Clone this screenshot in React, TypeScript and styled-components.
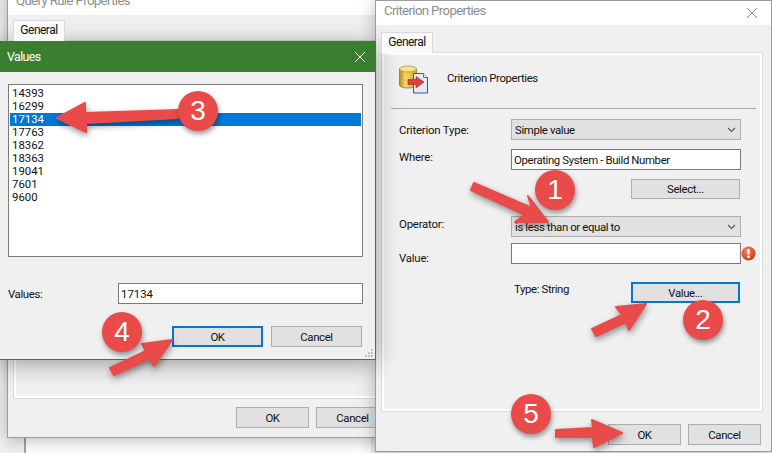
import styled, { createGlobalStyle } from 'styled-components'

const GlobalStyle = createGlobalStyle`
	html, body {
		margin: 0;
		height: 100%;
		overflow: hidden;
		background: #f0f0f0;
	}
	#root {
		height: 100%;
	}
`

const values = ['14393', '16299', '17134', '17763', '18362', '18363', '19041', '7601', '9600']

type Pt = [number, number]

// tail end, tapered shaft and head of each red callout arrow
const arrows: Pt[][] = [
	[[178, 110], [85, 113], [85, 103], [57, 118], [86, 132], [86, 123], [178, 118]],
	[[474, 183], [532, 208], [528, 196], [548, 222], [515, 222], [525, 215], [471, 190]],
	[[592, 329], [622, 315], [616, 307], [646, 304], [629, 330], [626, 322], [596, 336]],
	[[110, 368], [146, 351], [142, 344], [172, 340], [154, 366], [150, 358], [114, 375]],
	[[556, 430], [593, 428], [592, 420], [622, 433], [594, 447], [593, 437], [556, 437]],
]

const badges = [
	{ n: 1, x: 555, y: 190 },
	{ n: 2, x: 703, y: 320 },
	{ n: 3, x: 198, y: 111 },
	{ n: 4, x: 122, y: 332 },
	{ n: 5, x: 531, y: 414 },
]

function CloseIcon({ color }: { color: string }) {
	return (
		<svg width='12' height='12' viewBox='0 0 12 12'>
			<path d='M1 1 L11 11 M11 1 L1 11' stroke={color} strokeWidth='1' fill='none' />
		</svg>
	)
}

function Chevron() {
	return (
		<svg width='9' height='6' viewBox='0 0 9 6'>
			<path d='M1 1 L4.5 4.5 L8 1' stroke='#555' strokeWidth='1.1' fill='none' />
		</svg>
	)
}

function CriterionIcon() {
	return (
		<svg width='30' height='30' viewBox='0 0 30 30'>
			<defs>
				<linearGradient id='barrel' x1='0' x2='1' y1='0' y2='0'>
					<stop offset='0' stopColor='#b98d1c' />
					<stop offset='0.35' stopColor='#f5d766' />
					<stop offset='1' stopColor='#d7a926' />
				</linearGradient>
			</defs>
			<path d='M0.5 4 V20 C0.5 24 17.5 24 17.5 20 V4 Z' fill='url(#barrel)' stroke='#8f7a3a' strokeWidth='0.8' />
			<ellipse cx='9' cy='4' rx='8.5' ry='3' fill='#f7e48f' stroke='#a8944e' strokeWidth='0.8' />
			<path d='M14.5 8.5 H24.5 L28.5 12.5 V28 H14.5 Z' fill='#e3e9f6' stroke='#3d5685' strokeWidth='1' />
			<path d='M24.5 8.5 V12.5 H28.5' fill='#fff' stroke='#3d5685' strokeWidth='0.8' />
			<path d='M9 14.5 H17 V11.5 L25 17 L17 23 V19.5 H9 Z' fill='#d9413a' stroke='#a82a26' strokeWidth='0.6' />
		</svg>
	)
}

function ErrorIcon() {
	return (
		<svg width='15' height='15' viewBox='0 0 15 15'>
			<defs>
				<radialGradient id='err' cx='0.4' cy='0.3' r='0.8'>
					<stop offset='0' stopColor='#f58a5c' />
					<stop offset='1' stopColor='#c4301c' />
				</radialGradient>
			</defs>
			<circle cx='7.5' cy='7.5' r='7' fill='url(#err)' />
			<rect x='6.3' y='3' width='2.4' height='5.6' rx='0.8' fill='#fff' />
			<circle cx='7.5' cy='10.8' r='1.4' fill='#fff' />
		</svg>
	)
}

export default function App() {
	return (
		<Desktop>
			<GlobalStyle />

			<FarWindow />

			<Dialog $x={7} $y={-10} $w={393} $h={448}>
				<TitleBar>
					<TitleText>Query Rule Properties</TitleText>
				</TitleBar>
				<DialogBody $pad='5px 8px 0 5px'>
					<Tab>General</Tab>
					<TabPanel />
					<Footer $top={8} $bottom={9}>
						<Button $w={73}>OK</Button>
						<Button $w={73}>Cancel</Button>
					</Footer>
				</DialogBody>
			</Dialog>

			<Dialog $x={375} $y={0} $w={397} $h={452}>
				<TitleBar>
					<TitleText>Criterion Properties</TitleText>
					<CloseSlot $right={13}>
						<CloseIcon color='#8a8a8a' />
					</CloseSlot>
				</TitleBar>
				<DialogBody $pad='7px 8px 0 5px'>
					<Tab>General</Tab>
					<TabPanel>
						<PanelHeader>
							<CriterionIcon />
							<PanelTitle>Criterion Properties</PanelTitle>
						</PanelHeader>
						<Divider />
						<Form>
							<Row $top={10}>
								<FieldLabel $drop={4}>Criterion Type:</FieldLabel>
								<Combo>
									Simple value
									<Chevron />
								</Combo>
							</Row>
							<Row $top={9}>
								<FieldLabel $drop={1}>Where:</FieldLabel>
								<TextBox>Operating System - Build Number</TextBox>
							</Row>
							<Row $top={9}>
								<span />
								<Button $w={109} $h={20} $end>
									Select...
								</Button>
							</Row>
							<Row $top={17}>
								<FieldLabel $drop={1}>Operator:</FieldLabel>
								<Combo>
									is less than or equal to
									<Chevron />
								</Combo>
							</Row>
							<Row $top={6}>
								<FieldLabel $drop={8}>Value:</FieldLabel>
								<TextBox />
								<ErrorSlot>
									<ErrorIcon />
								</ErrorSlot>
							</Row>
							<Row $top={16}>
								<span />
								<TypeLine>
									Type: String
									<Button $w={109} $focused>
										Value...
									</Button>
								</TypeLine>
							</Row>
						</Form>
					</TabPanel>
					<Footer $top={12} $bottom={6}>
						<Button $w={73}>OK</Button>
						<Button $w={73}>Cancel</Button>
					</Footer>
				</DialogBody>
			</Dialog>

			<ValuesDialog>
				<GreenTitle>
					<span>Values</span>
					<CloseSlot $right={9}>
						<CloseIcon color='#fff' />
					</CloseSlot>
				</GreenTitle>
				<ValuesBody>
					<ListBox>
						{values.map(v => (
							<ListItem key={v} $selected={v === '17134'}>
								{v}
							</ListItem>
						))}
					</ListBox>
					<ValueRow>
						<span>Values:</span>
						<NumberBox>17134</NumberBox>
					</ValueRow>
					<ValueButtons>
						<Button $w={91} $focused>
							OK
						</Button>
						<Button $w={91}>Cancel</Button>
					</ValueButtons>
				</ValuesBody>
				<Grip width='8' height='8' viewBox='0 0 8 8'>
					<path d='M6 0h2v2H6z M3 3h2v2H3z M6 3h2v2H6z M0 6h2v2H0z M3 6h2v2H3z M6 6h2v2H6z' fill='#c4c4c4' />
				</Grip>
			</ValuesDialog>

			<ArrowLayer width='772' height='453' viewBox='0 0 772 453'>
				{arrows.map((pts, i) => (
					<polygon key={i} points={pts.map(p => p.join(',')).join(' ')} />
				))}
			</ArrowLayer>

			{badges.map(b => (
				<Badge key={b.n} $x={b.x} $y={b.y}>
					{b.n}
				</Badge>
			))}
		</Desktop>
	)
}

const Desktop = styled.div`
	position: relative;
	width: 772px;
	height: 453px;
	overflow: hidden;
	background: #f0f0f0;
	font-family: Roboto, 'Liberation Sans', sans-serif;
	font-size: 11.4px;
	letter-spacing: -0.38px;
	color: #111;
`

const FarWindow = styled.div`
	position: absolute;
	left: 24px;
	top: 380px;
	width: 345px;
	height: 120px;
	background: #fff;
	border-left: 2px solid #a3a3a3;
`

const Dialog = styled.div<{ $x: number; $y: number; $w: number; $h: number }>`
	position: absolute;
	left: ${p => p.$x}px;
	top: ${p => p.$y}px;
	width: ${p => p.$w}px;
	height: ${p => p.$h}px;
	box-sizing: border-box;
	display: flex;
	flex-direction: column;
	background: #f0f0f0;
	border: 1px solid #9c9c9c;
	box-shadow: 0 2px 16px rgba(0, 0, 0, 0.28);
`

const TitleBar = styled.div`
	position: relative;
	flex: 0 0 24px;
	box-sizing: border-box;
	display: flex;
	align-items: center;
	padding: 0 0 6px 8px;
	background: #fff;
`

const TitleText = styled.span`
	font-size: 13.2px;
	letter-spacing: -0.62px;
	color: #8d8d8d;
`

const CloseSlot = styled.span<{ $right: number }>`
	position: absolute;
	right: ${p => p.$right}px;
	top: 50%;
	transform: translateY(-50%);
	display: flex;
`

const DialogBody = styled.div<{ $pad: string }>`
	flex: 1;
	min-height: 0;
	display: flex;
	flex-direction: column;
	align-items: flex-start;
	padding: ${p => p.$pad};
`

const Tab = styled.div`
	position: relative;
	z-index: 1;
	box-sizing: border-box;
	width: 52px;
	height: 21px;
	display: flex;
	align-items: center;
	justify-content: center;
	padding-bottom: 2px;
	background: #fafafa;
	border: 1px solid #d9d9d9;
	border-bottom: none;
	font-size: 12px;
	letter-spacing: -0.5px;
`

const TabPanel = styled.div`
	flex: 1;
	align-self: stretch;
	min-height: 0;
	margin-top: -1px;
	background: #f0f0f0;
	border: 3px solid #fff;
	outline: 1px solid #d9d9d9;
	outline-offset: -1px;
`

const PanelHeader = styled.div`
	display: flex;
	align-items: center;
	gap: 18px;
	padding: 10px 0 0 15px;
	height: 30px;
`

const PanelTitle = styled.span`
	padding-bottom: 4px;
`

const Divider = styled.div`
	height: 1px;
	margin: 13px 4px 0 7px;
	background: #a8a8a8;
`

const Form = styled.div`
	display: flex;
	flex-direction: column;
	padding-left: 15px;
`

const Row = styled.div<{ $top: number }>`
	display: grid;
	grid-template-columns: 112px 230px 15px;
	align-items: start;
	margin-top: ${p => p.$top}px;
`

const FieldLabel = styled.span<{ $drop: number }>`
	padding-top: ${p => p.$drop}px;
	line-height: 15px;
	letter-spacing: -0.2px;
`

const Combo = styled.div`
	box-sizing: border-box;
	height: 21px;
	display: flex;
	align-items: center;
	justify-content: space-between;
	padding: 0 4px 0 3px;
	background: #e1e1e1;
	border: 1px solid #adadad;
`

const TextBox = styled.div`
	box-sizing: border-box;
	height: 21px;
	display: flex;
	align-items: center;
	padding: 0 2px;
	background: #fff;
	border: 1px solid #7a7a7a;
`

const NumberBox = styled(TextBox)`
	letter-spacing: 0;
`

const ErrorSlot = styled.span`
	display: flex;
	padding-top: 3px;
`

const Button = styled.div<{ $w: number; $h?: number; $focused?: boolean; $end?: boolean }>`
	box-sizing: border-box;
	width: ${p => p.$w}px;
	height: ${p => p.$h ?? 21}px;
	display: flex;
	align-items: center;
	justify-content: center;
	background: #e1e1e1;
	border: ${p => (p.$focused ? '2px solid #0078d7' : '1px solid #adadad')};
	margin-left: ${p => (p.$end ? 'auto' : '0')};
	margin-right: ${p => (p.$end ? '1px' : '0')};
`

const TypeLine = styled.div`
	display: flex;
	justify-content: space-between;
	align-items: flex-start;
	padding-left: 3px;
	margin-right: 1px;
`

const Footer = styled.div<{ $top: number; $bottom: number }>`
	align-self: stretch;
	display: flex;
	justify-content: flex-end;
	gap: 7px;
	margin-top: ${p => p.$top}px;
	padding-bottom: ${p => p.$bottom}px;
	padding-right: 2px;
`

const ValuesDialog = styled.div`
	position: absolute;
	left: -2px;
	top: 41px;
	width: 378px;
	height: 319px;
	box-sizing: border-box;
	display: flex;
	flex-direction: column;
	background: #f0f0f0;
	border: 1px solid #3a7f2f;
	border-top: none;
	box-shadow: 0 4px 22px rgba(0, 0, 0, 0.35);
`

const GreenTitle = styled.div`
	position: relative;
	flex: 0 0 31px;
	display: flex;
	align-items: center;
	padding-left: 8px;
	background: #3a7f2f;
	color: #fff;
	font-size: 12.4px;
	letter-spacing: -0.6px;
`

const ValuesBody = styled.div`
	display: flex;
	flex-direction: column;
	padding: 12px 12px 0 9px;
`

const ListBox = styled.div`
	box-sizing: border-box;
	height: 173px;
	padding: 2px 1px;
	background: #fff;
	border: 1px solid #7a7a7a;
	letter-spacing: 0;
`

const ListItem = styled.div<{ $selected?: boolean }>`
	height: 13px;
	line-height: 13px;
	padding-left: 2px;
	background: ${p => (p.$selected ? '#0078d7' : 'transparent')};
	color: ${p => (p.$selected ? '#fff' : '#111')};
`

const ValueRow = styled.div`
	display: grid;
	grid-template-columns: 110px 1fr;
	align-items: center;
	margin-top: 26px;
`

const ValueButtons = styled.div`
	display: flex;
	justify-content: flex-end;
	gap: 8px;
	margin-top: 22px;
	padding-right: 1px;
`

const Grip = styled.svg`
	position: absolute;
	right: 2px;
	bottom: 2px;
`

const ArrowLayer = styled.svg`
	position: absolute;
	left: 0;
	top: 0;
	filter: drop-shadow(1px 3px 3px rgba(0, 0, 0, 0.4));

	polygon {
		fill: #e94b4a;
		stroke: #e94b4a;
		stroke-width: 2;
		stroke-linejoin: round;
	}
`

const Badge = styled.div<{ $x: number; $y: number }>`
	position: absolute;
	left: ${p => p.$x - 20}px;
	top: ${p => p.$y - 20}px;
	width: 40px;
	height: 40px;
	display: flex;
	align-items: center;
	justify-content: center;
	border-radius: 50%;
	background: #e94b4a;
	box-shadow: 1px 3px 5px rgba(0, 0, 0, 0.4);
	color: #fff;
	font-family: 'Liberation Sans', sans-serif;
	font-size: 28px;
	letter-spacing: 0;
`
